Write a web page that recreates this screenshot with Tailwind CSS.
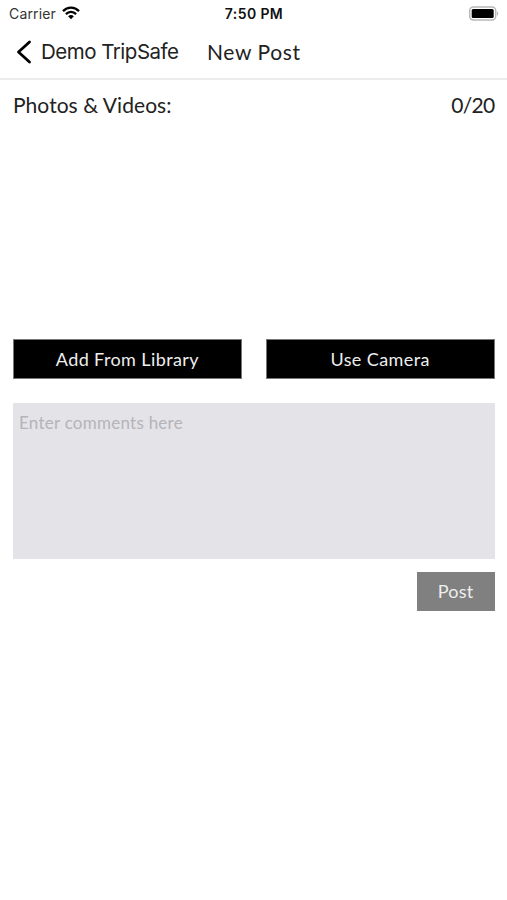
<!DOCTYPE html>
<html lang="en">
<head>
<meta charset="utf-8">
<title>New Post</title>
<script src="https://cdn.jsdelivr.net/npm/@tailwindcss/browser@4"></script>
</head>
<body class="bg-white">
<div class="w-[507px] h-[900px] flex flex-col overflow-hidden whitespace-nowrap font-['Lato',sans-serif] text-[#222]">
  <header class="h-20 shrink-0 flex flex-col border-b-2 border-[#ececec]">
    <div class="h-[26px] grid grid-cols-[1fr_auto_1fr] items-center pl-[9px] pr-[8px] font-['Inter',sans-serif] text-[14px]">
      <div class="flex items-center gap-[6px]">
        <span class="text-[#333] tracking-[0.15px]">Carrier</span>
        <svg class="w-[18px] h-[14px]" viewBox="0 0 18 14" fill="none" stroke="#000" stroke-width="2.3"><path d="M1 5.1C5.5.4 12.500.4 17 5.100"/><path d="M3.900 8.100C6.800 5.200 11.200 5.200 14.100 8.100"/><path d="M6.100 10.300Q9 7.600 11.900 10.300L9 13.300Z" fill="#000" stroke="none"/></svg>
      </div>
      <span class="text-center font-semibold text-[#111] tracking-[0.4px]">7:50 PM</span>
      <svg class="w-[31px] h-[15px] justify-self-end" viewBox="0 0 31 15"><rect x="1.700" y="1" width="26" height="13" rx="3.800" fill="#fff" stroke="#b8b8b8" stroke-width="1.500"/><rect x="3.700" y="3" width="22" height="9" rx="1.500"/><path d="M29 5Q31.500 7.500 29 10Z" fill="#b8b8b8"/></svg>
    </div>
    <div class="flex-1 flex items-center pl-4">
      <svg class="w-4 h-6" viewBox="0 0 16 24" fill="none" stroke="#000" stroke-width="2.800" stroke-linecap="round" stroke-linejoin="round"><path d="M13.500 2L2.500 12L13.500 22"/></svg>
      <span class="w-[166px] pl-[9px] font-['Inter',sans-serif] text-[20.500px] tracking-[-0.5px]">Demo TripSafe</span>
      <h1 class="pl-[9px] text-[21px] tracking-[0.6px]">New Post</h1>
    </div>
  </header>
  <main class="flex flex-col pl-[13px] pr-[12.500px]">
    <div class="h-[50px] flex items-center justify-between text-[21px]">
      <span class="tracking-[0.05px]">Photos &amp; Videos:</span>
      <span class="tracking-[-0.7px]">0/20</span>
    </div>
    <div class="mt-[209px] flex gap-6 text-[18px] text-[#eee]">
      <button class="flex-1 h-10 bg-black border border-[#777] tracking-[0.4px]">Add From Library</button>
      <button class="flex-1 h-10 bg-black border border-[#777] tracking-[0.4px]">Use Camera</button>
    </div>
    <div class="mt-6 h-[156px] bg-[#e4e3e8] pt-[6px] pl-[6px] text-[17px] leading-[27px] text-[#b5b4b9] tracking-[0.25px]">Enter comments here</div>
    <button class="mt-[13px] self-end w-[78px] h-[39px] bg-[#808080] text-[18px] text-[#eee] tracking-[0.2px]">Post</button>
  </main>
</div>
</body>
</html>
